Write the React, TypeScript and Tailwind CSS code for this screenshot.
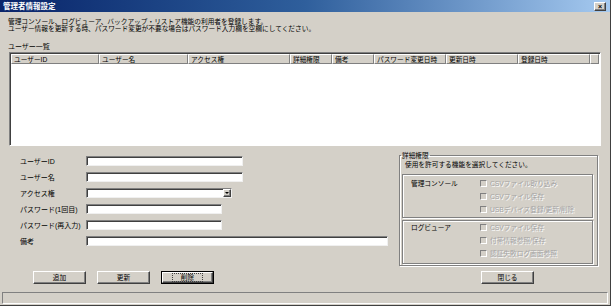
import React from "react";

const FONT = { fontFamily: '"Liberation Sans", "Noto Sans CJK JP", sans-serif' };

const columns = [
  { label: "ユーザーID", w: "w-[88px]" },
  { label: "ユーザー名", w: "w-[89px]" },
  { label: "アクセス権", w: "w-[102px]" },
  { label: "詳細権限", w: "w-[42px]" },
  { label: "備考", w: "w-[42px]" },
  { label: "パスワード変更日時", w: "w-[72px]" },
  { label: "更新日時", w: "w-[72px]" },
  { label: "登録日時", w: "w-[72px]" },
  { label: "", w: "flex-1" },
];

const raised =
  "bg-[#d4d0c8] border border-t-white border-l-white border-r-[#404040] border-b-[#404040] shadow-[inset_-1px_-1px_0_#808080]";

function Field({ label, width, select }: { label: string; width: string; select?: boolean }) {
  return (
    <div className="flex items-center h-[10px]">
      <span className="w-[66px] shrink-0 whitespace-nowrap text-[7px]">{label}</span>
      <div
        className={`${width} h-[10px] bg-white border-t border-l border-t-[#808080] border-l-[#808080] border-b border-r border-b-[#f0f0f0] border-r-[#f0f0f0] shadow-[inset_1px_1px_0_#404040] flex justify-end`}
      >
        {select && (
          <div className={`${raised} w-[8px] h-[8px] flex items-center justify-center`}>
            <span className="block w-0 h-0 border-l-[2px] border-r-[2px] border-t-[2px] border-l-transparent border-r-transparent border-t-black" />
          </div>
        )}
      </div>
    </div>
  );
}

function Button({ label, focused }: { label: string; focused?: boolean }) {
  if (focused) {
    return (
      <div className="w-[53px] h-[13px] border border-black">
        <div className={`${raised} w-full h-full flex items-center justify-center`}>
          <span className="border border-dotted border-[#404040] px-[8px] leading-[7px]">{label}</span>
        </div>
      </div>
    );
  }
  return (
    <div className={`${raised} w-[53px] h-[13px] flex items-center justify-center`}>{label}</div>
  );
}

function Check({ label }: { label: string }) {
  return (
    <div className="flex items-center h-[13px]">
      <span className="w-[7px] h-[7px] shrink-0 bg-[#d4d0c8] border-t border-l border-t-[#808080] border-l-[#808080] border-b border-r border-b-white border-r-white" />
      <span className="ml-[3px] text-[#a4a4a4] whitespace-nowrap [text-shadow:1px_1px_0_#ffffff]">{label}</span>
    </div>
  );
}

function InnerGroup({ title, items, pad }: { title: string; items: string[]; pad: string }) {
  return (
    <div
      className={`ml-[2px] mr-[4px] h-[44px] border border-[#808080] shadow-[inset_1px_1px_0_#fff,1px_1px_0_#fff] flex ${pad}`}
    >
      <div className="w-[77px] pl-[8px] h-[13px] flex items-center">{title}</div>
      <div className="flex flex-col">
        {items.map((i) => (
          <Check key={i} label={i} />
        ))}
      </div>
    </div>
  );
}

export default function App() {
  return (
    <div
      style={FONT}
      className="w-[611px] h-[306px] bg-[#d4d0c8] text-black text-[6.7px] leading-[7px] flex flex-col overflow-hidden border-r border-b border-r-[#404040] border-b-[#404040]"
    >
      {/* title bar */}
      <div className="h-[12px] shrink-0 flex items-center justify-between bg-linear-to-r from-[#0a246a] via-[#2f5f9c] to-[#a6caf0] pl-[3px] pr-[4px]">
        <span className="text-white font-bold text-[7.5px]">管理者情報設定</span>
        <div className={`${raised} w-[12px] h-[9px] flex items-center justify-center font-bold text-[7px] leading-none`}>
          ×
        </div>
      </div>

      <div className="flex-1 flex flex-col px-[8px]">
        <p className="mt-[6px]">
          管理コンソール、ログビューア、バックアップ・リストア機能の利用者を登録します。
          <br />
          ユーザー情報を更新する時、パスワード変更が不要な場合はパスワード入力欄を空欄にしてください。
        </p>
        <div className="mt-[11px] text-[7px]">ユーザー一覧</div>

        {/* user list */}
        <div className="mt-[2px] ml-[1px] w-[592px] h-[94px] border border-t-[#808080] border-l-[#808080] border-b-white border-r-white shadow-[inset_1px_1px_0_#404040] bg-white flex flex-col p-[1px]">
          <div className="flex h-[10px] shrink-0">
            {columns.map((c, i) => (
              <div
                key={i}
                className={`${c.w} ${raised} shadow-none border-b-[#808080] border-r-[#808080] pl-[2px] flex items-center whitespace-nowrap overflow-hidden`}
              >
                {c.label}
              </div>
            ))}
          </div>
        </div>

        <div className="flex mt-[4px]">
          {/* form */}
          <div className="w-[391px] shrink-0 flex flex-col">
            <div className="pl-[12px] pt-[6px] flex flex-col gap-[6px]">
              <Field label="ユーザーID" width="w-[157px]" />
              <Field label="ユーザー名" width="w-[157px]" />
              <Field label="アクセス権" width="w-[146px]" select />
              <Field label="パスワード(1回目)" width="w-[136px]" />
              <Field label="パスワード(再入力)" width="w-[136px]" />
              <Field label="備考" width="w-[302px]" />
            </div>
            <div className="flex gap-[11px] pl-[25px] mt-[25px]">
              <Button label="追加" />
              <Button label="更新" />
              <Button label="削除" focused />
            </div>
          </div>

          {/* detail permissions */}
          <div className="w-[199px] flex flex-col">
            <fieldset className="mt-[2px] h-[114px] border border-[#808080] shadow-[inset_1px_1px_0_#fff,1px_1px_0_#fff]">
              <legend className="ml-[1px] px-[1px]">詳細権限</legend>
              <div className="pl-[5px] mt-[2px] h-[7px]">使用を許可する機能を選択してください。</div>
              <div className="mt-[6px] flex flex-col gap-[2px]">
                <InnerGroup
                  title="管理コンソール"
                  pad="pt-[2px]"
                  items={["CSVファイル取り込み", "CSVファイル保存", "USBデバイス登録/更新/削除"]}
                />
                <InnerGroup
                  title="ログビューア"
                  pad="pt-0"
                  items={["CSVファイル保存", "付帯情報参照/保存", "認証失敗ログ画面参照"]}
                />
              </div>
            </fieldset>
            <div className="ml-[82px] mt-[5px]">
              <Button label="閉じる" />
            </div>
          </div>
        </div>
      </div>

      {/* status bar */}
      <div className="mx-[2px] mb-[1px] h-[12px] shrink-0 border border-t-[#808080] border-l-[#808080] border-b-white border-r-white" />
    </div>
  );
}
